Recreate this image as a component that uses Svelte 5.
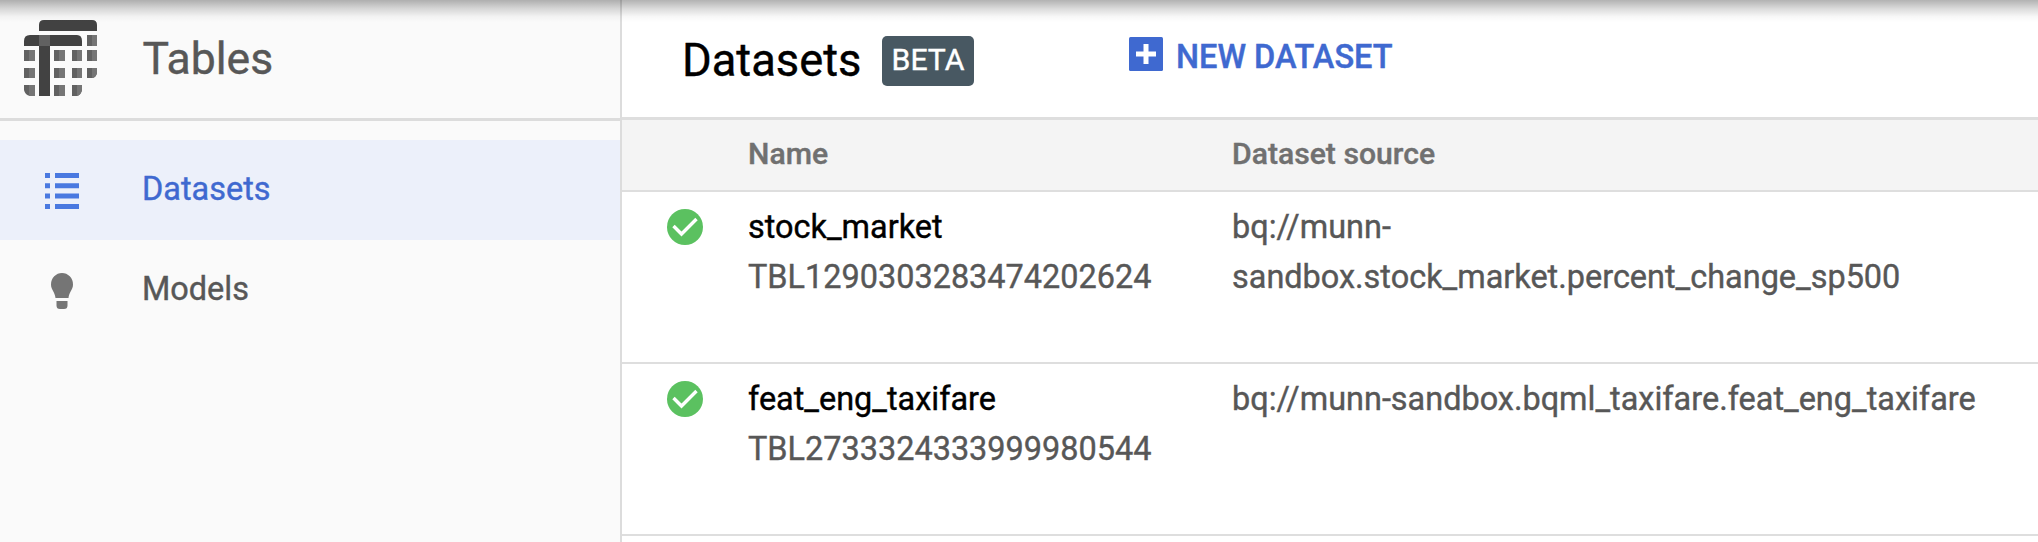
<script>
  const nav = [
    { label: 'Datasets', icon: 'list', active: true },
    { label: 'Models', icon: 'bulb', active: false }
  ];
  const rows = [
    { name: 'stock_market', id: 'TBL1290303283474202624', source: 'bq://munn-sandbox.stock_market.percent_change_sp500' },
    { name: 'feat_eng_taxifare', id: 'TBL2733324333999980544', source: 'bq://munn-sandbox.bqml_taxifare.feat_eng_taxifare' }
  ];
</script>

<div class="app">
  <aside>
    <div class="brand">
      <svg class="logo" width="74" height="78" viewBox="0 0 74 78">
        <path fill="#424242" d="M15 11V5q0-5 5-5h48q5 0 5 5v6zM0 26v-5q0-6 6-6h47q5 0 5 6v5zM15 26h11v50H15z" />
        <path fill="#616161" d="M15 15h11v11H15z" />
        <path fill="#616161" d="M63 15h10v11H63zM0 30h11v11H0zM30 30h11v11H30zM48 30h10v11H48zM63 30h10v11H63zM0 48h11v10H0zM30 48h11v10H30zM48 48h10v10H48zM63 48h10v5q-1 5-5 5h-5zM0 65h11v11H6q-5-1-6-6zM30 65h11v11H30zM48 65h10v5q-1 5-5 6h-5z" />
        <path fill="#757575" d="M68 15h5v11h-5zM5 30h6v11H5zM35 30h6v11h-6zM53 30h5v11h-5zM68 30h5v11h-5zM5 48h6v10H5zM35 48h6v10h-6zM53 48h5v10h-5zM68 48h5v5q-1 4-5 5zM5 65h6v11H5zM35 65h6v11h-6zM53 65h5v5q-1 5-5 6z" />
      </svg>
      <span>Tables</span>
    </div>
    <nav>
      {#each nav as item}
        <div class="item" class:active={item.active}>
          <span class="glyph">
            {#if item.icon === 'list'}
              <svg width="34" height="36" viewBox="0 0 34 36" fill="#4a79e0"><path d="M0 0h5v5H0zM10 0h24v5H10zM0 10.3h5v5H0zM10 10.3h24v5H10zM0 20.6h5v5H0zM10 20.6h24v5H10zM0 31h5v5H0zM10 31h24v5H10z" /></svg>
            {:else}
              <svg width="22" height="36" viewBox="0 0 22 36" fill="#757575"><path d="M11 0a11 11.500 0 0 1 11 11.500C22 17 18 19 17.500 25H4.500C4 19 0 17 0 11.500A11 11.500 0 0 1 11 0zM5.500 28h11v4.500q0 3.500-3.500 3.500H9q-3.500 0-3.500-3.500z" /></svg>
            {/if}
          </span>
          <span>{item.label}</span>
        </div>
      {/each}
    </nav>
  </aside>
  <main>
    <header>
      <h1>Datasets</h1>
      <span class="beta">BETA</span>
      <button>
        <svg width="34" height="34" viewBox="0 0 34 34"><rect width="34" height="34" rx="1.500" fill="#3f69d0" /><path fill="#fff" d="M14.500 7h5v7.500H27v5h-7.500V27h-5v-7.500H7v-5h7.500z" /></svg>
        <span>NEW DATASET</span>
      </button>
    </header>
    <div class="row head"><span></span><span>Name</span><span>Dataset source</span></div>
    {#each rows as row}
      <div class="row">
        <svg class="check" width="36" height="36" viewBox="0 0 36 36"><circle cx="18" cy="18" r="18" fill="#5bc160" /><path d="M6.500 17l8 8L29.500 10" fill="none" stroke="#fff" stroke-width="3.400" /></svg>
        <div class="name"><b>{row.name}</b><span>{row.id}</span></div>
        <div class="source">{row.source}</div>
      </div>
    {/each}
  </main>
  <div class="shade"></div>
</div>

<style>
  .app { position: relative; display: flex; width: 2038px; height: 542px; overflow: hidden; background: #fff; font-family: Roboto, sans-serif; color: #575757; font-size: 32.45px; -webkit-text-stroke: 0.4px currentColor; }
  aside { box-sizing: border-box; width: 622px; flex: none; background: #fafafa; border-right: 2px solid #dcdcdc; }
  .brand { box-sizing: border-box; height: 121px; border-bottom: 3px solid #dcdcdc; display: flex; padding: 20px 0 0 24px; font-size: 44.500px; line-height: 78px; }
  .logo { flex: none; margin-right: 44.500px; }
  nav { padding-top: 19px; }
  .item { height: 100px; display: flex; line-height: 98px; }
  .active { background: #ecf0fa; color: #3f69d0; }
  .glyph { width: 124px; display: flex; align-items: center; justify-content: center; margin-right: 18px; padding-top: 2px; }
  main { flex: 1; min-width: 0; }
  header { box-sizing: border-box; height: 120px; border-bottom: 3px solid #dedede; display: flex; align-items: flex-start; padding: 36px 0 0 60px; }
  h1 { margin: 0; font-size: 45.300px; font-weight: 400; line-height: 49px; color: #000; width: 200px; }
  .beta { width: 92px; height: 50px; border-radius: 5px; background: #485862; color: #fff; font-size: 30.200px; line-height: 47px; text-align: center; margin-right: 155px; }
  button { border: 0; padding: 1px 0 0; background: none; display: flex; gap: 13px; font: 500 32.500px/41px Roboto, sans-serif; color: #3f69d0; -webkit-text-stroke: 0.4px currentColor; }
  .row { box-sizing: border-box; height: 172px; border-bottom: 2px solid #dedede; display: grid; grid-template-columns: 126px 484px 1fr; line-height: 50px; padding-top: 10px; }
  .head { height: 72px; background: #f4f4f4; color: #707070; font-size: 30.150px; font-weight: 500; padding-top: 9px; }
  .check { margin: 7px 0 0 45px; }
  .name { display: flex; flex-direction: column; }
  b { font-weight: 400; color: #000; }
  .source { max-width: 750px; }
  .shade { position: absolute; left: 0; top: 0; width: 100%; height: 22px; background: linear-gradient(rgba(0,0,0,.3), rgba(0,0,0,.14) 40%, rgba(0,0,0,.03) 75%, transparent); }
</style>
